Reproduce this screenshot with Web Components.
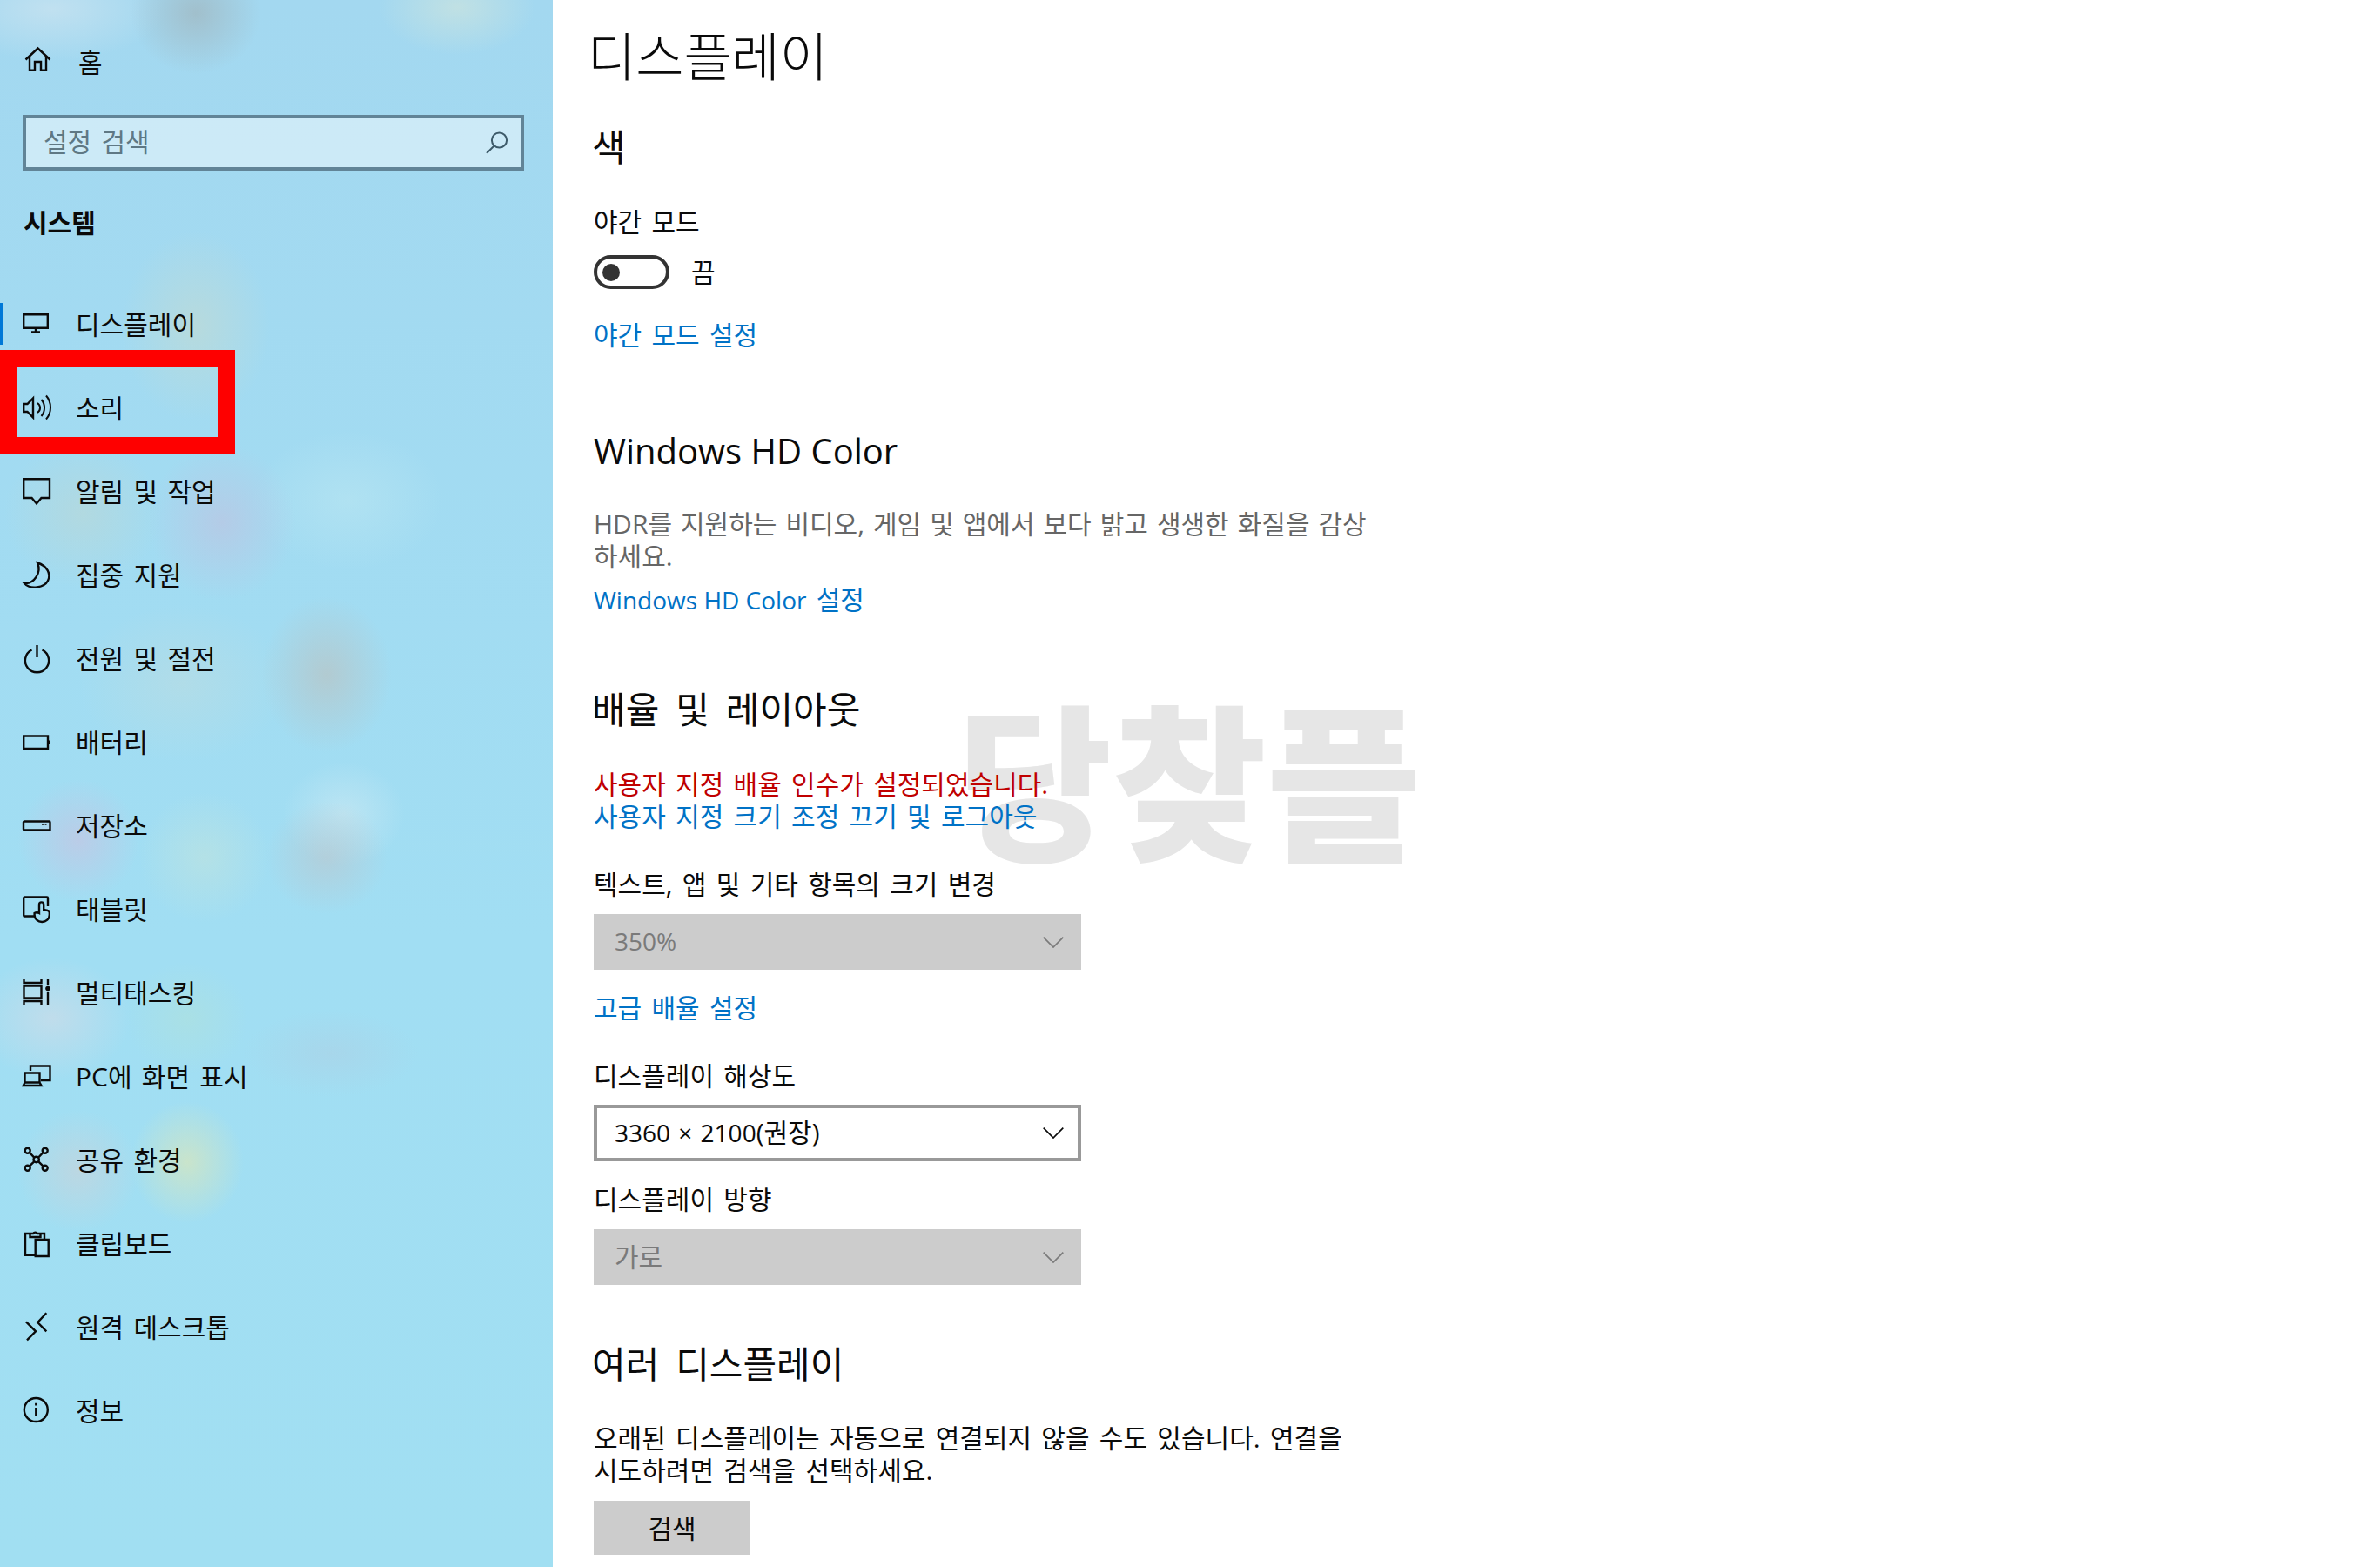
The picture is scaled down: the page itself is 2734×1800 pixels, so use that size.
<!DOCTYPE html>
<html lang="ko">
<head>
<meta charset="utf-8">
<title>디스플레이</title>
<style>
  html, body { margin: 0; height: 100%; background: #fff; }
  body { font-family: "Open Sans", "Noto Sans CJK KR", sans-serif; overflow: hidden; }
</style>
</head>
<body>
<settings-window>
  <settings-sidebar slot="side"></settings-sidebar>
  <display-page slot="main"></display-page>
</settings-window>

<script>
const FONT = '"Open Sans", "Noto Sans CJK KR", sans-serif';

// 32x32 line icons, drawn from the reference
const ICONS = {
  home: '<path d="M3.5 14.5 17.5 1.5 31.5 14.5M8 11V26.8h6V17h7v9.8h6V11"/>',
  display: '<path d="M1.2 4.2H28.8V19.8H1.2ZM15 20v4M10 24.5H20"/>',
  sound: '<path d="M1.2 11H5.5L12 4.5V26.5L5.5 20H1.2Z"/><path d="M17 10A6.5 6.5 0 0 1 17 21M21.5 6A14.6 14.6 0 0 1 21.5 25M27 1.5A20.7 20.7 0 0 1 27 28.5" stroke-width="2"/>',
  notify: '<path d="M1.2 1.2H31V23H21.5L16 29.5 10.5 23H1.2Z"/>',
  moon: '<path d="M17 1.5C28 5 33 14 29 22 25 30 9 33 2 25 13 26 22 13 17 1.5Z"/>',
  power: '<path d="M10.5 5.5A13.6 13.6 0 1 0 22.5 5.5M16.5 0V14"/>',
  battery: '<path d="M1.2 8.5H29V23H1.2Z"/><path d="M30.5 13.5V18" stroke-width="3"/>',
  storage: '<path d="M2 10.5H30.5a1 1 0 0 1 1 1V20.5H2a1 1 0 0 1-1-1V11.5a1 1 0 0 1 1-1Z"/><path d="M22 13.8h2M25.5 13.8h2" stroke-width="1.8"/>',
  tablet: '<path d="M14 23.5H2.2a1 1 0 0 1-1-1V2.5a1 1 0 0 1 1-1H28a1 1 0 0 1 1 1V12"/><path d="M19 20V10a2.6 2.6 0 0 1 5.2 0V16l4.6 1a2.4 2.4 0 0 1 2 2.4V22a8.6 8 0 0 1-17.2 0V20Q16 18.5 19 20Z"/>',
  tasks: '<path d="M1.5 0V4H21.5V0M1.5 7.5H21.5V21.5H1.5ZM1.5 29V25H21.5V29M29 0V7M29 14V29"/><circle cx="29" cy="10.5" r="2.8" fill="currentColor" stroke="none"/>',
  project: '<path d="M9 9V3.5H31.5V20H21M2.5 11.5H19.5V22.5H2.5ZM2.5 22.5 .8 26H21.5L19.5 22.5"/>',
  shared: '<circle cx="5.7" cy="4.7" r="3"/><circle cx="25.7" cy="4.7" r="3"/><circle cx="5.7" cy="24.7" r="3"/><circle cx="25.7" cy="24.7" r="3"/><circle cx="15.7" cy="15" r="3.2"/><path d="M8 7 13.5 12.8M23.4 7 18 12.8M8 22.4 13.5 17.2M23.4 22.4 18 17.2"/>',
  clipboard: '<path d="M14.7 28.7H3V4H8.5M20.5 4H25V11M8.5 8V4H12a3 3 0 0 1 5 0H20.5V8ZM14.7 11H29.7V30H14.7Z"/>',
  remote: '<path d="M4 9.3 15 20.3 5 30.3M27.3-.7 17.3 10 27.3 20.3"/>',
  info: '<circle cx="15.3" cy="14.5" r="13.5"/><path d="M15.3 12V21.5M15.3 6.8V9.4"/>',
};

class SettingsWindow extends HTMLElement {
  constructor() {
    super();
    this.attachShadow({ mode: 'open' }).innerHTML = `
      <style>
        :host { display: grid; grid-template-columns: 635px 1fr; height: 1800px; }
      </style>
      <slot name="side"></slot>
      <slot name="main"></slot>`;
  }
}

class SideIcon extends HTMLElement {
  static get observedAttributes() {
    return ['name'];
  }
  constructor() {
    super();
    this.attachShadow({ mode: 'open' }).innerHTML = `
      <style>
        :host { display: block; width: 32px; height: 32px; color: #0a0a0a; flex: none; }
        svg { display: block; overflow: visible; fill: none; stroke: currentColor; stroke-width: 2.4; }
      </style>
      <svg width="32" height="32" viewBox="0 0 32 32"></svg>`;
  }
  attributeChangedCallback(attr, oldVal, newVal) {
    this.shadowRoot.querySelector('svg').innerHTML = ICONS[newVal] || '';
  }
}

class NavItem extends HTMLElement {
  constructor() {
    super();
    this.attachShadow({ mode: 'open' }).innerHTML = `
      <style>
        :host {
          display: flex; align-items: center; position: relative;
          height: 96px; box-sizing: border-box; padding-left: 26px;
          font-size: 30px; word-spacing: 3.5px; color: #0a0a0a;
        }
        .label { margin-left: 29px; line-height: 40px; white-space: pre; }
        .bar { display: none; position: absolute; left: 0; top: 23px; width: 3px; height: 48px; background: #0078d7; }
        :host([active]) .bar { display: block; }
        .mark { display: none; position: absolute; left: 0; top: -19px; width: 270px; height: 120px; box-sizing: border-box; border: 20px solid #fe0000; }
        :host([marked]) .mark { display: block; }
      </style>
      <span class="bar"></span>
      <side-icon id="ic"></side-icon>
      <span class="label"><slot></slot></span>
      <span class="mark"></span>`;
  }
  connectedCallback() {
    this.shadowRoot.getElementById('ic').setAttribute('name', this.getAttribute('icon'));
  }
}

class SearchBox extends HTMLElement {
  constructor() {
    super();
    this.attachShadow({ mode: 'open' }).innerHTML = `
      <style>
        :host {
          display: flex; align-items: center; justify-content: space-between;
          width: 576px; height: 64px; box-sizing: border-box;
          border: 4px solid #618497; background: rgba(255,255,255,.45);
          padding: 0 14px 0 20px;
          font-size: 30px; word-spacing: 3.5px; color: #5f7884;
        }
        span { padding-bottom: 6px; }
        svg { display: block; fill: none; stroke: #3d5a69; stroke-width: 2; }
      </style>
      <span><slot></slot></span>
      <svg width="26" height="26" viewBox="0 0 26 26"><circle cx="15.5" cy="10" r="8.6"/><path d="M9.5 16.5 1 25"/></svg>`;
  }
}

class SettingsSidebar extends HTMLElement {
  constructor() {
    super();
    this.attachShadow({ mode: 'open' }).innerHTML = `
      <style>
        :host {
          display: block; height: 1800px; overflow: hidden; box-sizing: border-box;
          font-family: ${FONT};
          background:
            radial-gradient(75px 70px at 225px 15px, rgba(160,175,180,.6), transparent),
            radial-gradient(130px 60px at 60px 10px, rgba(205,228,240,.7), transparent),
            radial-gradient(90px 55px at 525px 8px, rgba(205,228,222,.7), transparent),
            radial-gradient(85px 110px at 225px 375px, rgba(200,218,205,.55), transparent),
            radial-gradient(85px 90px at 255px 600px, rgba(190,195,225,.65), transparent),
            radial-gradient(90px 85px at 95px 590px, rgba(190,215,210,.55), transparent),
            radial-gradient(110px 80px at 400px 575px, rgba(190,232,242,.5), transparent),
            radial-gradient(75px 90px at 375px 775px, rgba(185,195,195,.7), transparent),
            radial-gradient(120px 90px at 210px 785px, rgba(195,220,220,.45), transparent),
            radial-gradient(70px 70px at 90px 965px, rgba(200,195,225,.65), transparent),
            radial-gradient(75px 75px at 235px 985px, rgba(195,228,220,.55), transparent),
            radial-gradient(70px 65px at 375px 985px, rgba(190,195,200,.55), transparent),
            radial-gradient(70px 60px at 395px 935px, rgba(200,232,242,.7), transparent),
            radial-gradient(70px 65px at 215px 1170px, rgba(175,225,220,.6), transparent),
            radial-gradient(90px 70px at 60px 1170px, rgba(205,220,232,.7), transparent),
            radial-gradient(65px 70px at 215px 1335px, rgba(215,230,190,.75), transparent),
            radial-gradient(70px 70px at 90px 1345px, rgba(205,210,215,.6), transparent),
            radial-gradient(100px 50px at 380px 1210px, rgba(175,205,225,.45), transparent),
            linear-gradient(#a3d8f0, #a1def3 60%, #a1dff2);
        }
        .home { display: flex; align-items: center; height: 40px; margin-top: 50px; padding-left: 26px; font-size: 30px; color: #0a0a0a; }
        .home span { margin-left: 32px; }
        search-box { margin: 42px 0 0 26px; }
        h2 { margin: 40px 0 0 27px; font-size: 30px; line-height: 40px; font-weight: 700; color: #0a0a0a; }
        nav { margin-top: 49px; }
      </style>
      <div class="home"><side-icon name="home"></side-icon><span>홈</span></div>
      <search-box>설정 검색</search-box>
      <h2>시스템</h2>
      <nav>
        <nav-item icon="display" active>디스플레이</nav-item>
        <nav-item icon="sound" marked>소리</nav-item>
        <nav-item icon="notify">알림 및 작업</nav-item>
        <nav-item icon="moon">집중 지원</nav-item>
        <nav-item icon="power">전원 및 절전</nav-item>
        <nav-item icon="battery">배터리</nav-item>
        <nav-item icon="storage">저장소</nav-item>
        <nav-item icon="tablet">태블릿</nav-item>
        <nav-item icon="tasks">멀티태스킹</nav-item>
        <nav-item icon="project">PC에 화면 표시</nav-item>
        <nav-item icon="shared">공유 환경</nav-item>
        <nav-item icon="clipboard">클립보드</nav-item>
        <nav-item icon="remote">원격 데스크톱</nav-item>
        <nav-item icon="info">정보</nav-item>
      </nav>`;
  }
}

class NightToggle extends HTMLElement {
  constructor() {
    super();
    this.attachShadow({ mode: 'open' }).innerHTML = `
      <style>
        :host { display: flex; align-items: center; height: 39px; font-size: 30px; color: #0a0a0a; }
        .track { width: 87px; height: 39px; box-sizing: border-box; border: 4px solid #333; border-radius: 20px; display: flex; align-items: center; padding-left: 6px; }
        .knob { width: 20px; height: 20px; border-radius: 50%; background: #333; }
        span { margin-left: 25px; }
      </style>
      <div class="track"><div class="knob"></div></div>
      <span><slot></slot></span>`;
  }
}

class ComboBox extends HTMLElement {
  constructor() {
    super();
    this.attachShadow({ mode: 'open' }).innerHTML = `
      <style>
        :host {
          display: flex; align-items: center; justify-content: space-between;
          width: 560px; height: 64px; box-sizing: border-box; padding: 0 20px 0 24px;
          background: #ccc; color: #7a7a7a; font-size: 30px;
        }
        :host([enabled]) { height: 65px; background: #fff; border: 4px solid #999; color: #0a0a0a; padding: 0 16px 0 20px; }
        span { padding-bottom: 2px; }
        svg { display: block; fill: none; stroke: currentColor; stroke-width: 1.7; }
      </style>
      <span><slot></slot></span>
      <svg width="24" height="13" viewBox="0 0 24 13"><path d="M.7 .7 12 12 23.3 .7"/></svg>`;
  }
}

class DisplayPage extends HTMLElement {
  constructor() {
    super();
    this.attachShadow({ mode: 'open' }).innerHTML = `
      <style>
        :host {
          display: block; position: relative; height: 1800px; box-sizing: border-box;
          padding: 25px 0 0 47px; overflow: hidden;
          font-family: ${FONT}; font-size: 30px; line-height: 37px; word-spacing: 3.5px; color: #0a0a0a;
        }
        h1, h3, p { margin: 0; font-weight: 400; position: relative; }
        h1 { font-size: 60px; line-height: 80px; margin-left: -7px; font-weight: 300; }
        h3 { font-size: 42px; line-height: 60px; word-spacing: 8px; margin-left: -2px; }
        h3.latin { font-size: 40px; word-spacing: 0; margin-left: 0; }
        p { width: 890px; }
        .en { font-size: 28px; word-spacing: 0; }
        .link { color: #0072c6; }
        .note { color: #666; word-spacing: 2.2px; }
        .warn { color: #c00000; }
        night-toggle, combo-box, .find { position: relative; }
        .find { display: flex; align-items: center; justify-content: center; width: 180px; height: 62px; background: #ccc; }
        .mark { position: absolute; left: 465px; top: 770px; font-size: 193px; line-height: 260px; font-weight: 900; color: #e6e6e6; white-space: nowrap; word-spacing: 0; }
      </style>
      <div class="mark">당찾플</div>
      <h1>디스플레이</h1>
      <h3 style="margin-top:34px">색</h3>
      <p style="margin-top:37px">야간 모드</p>
      <night-toggle style="margin-top:20px">끔</night-toggle>
      <p class="link" style="margin-top:34px">야간 모드 설정</p>
      <h3 class="latin" style="margin-top:85px">Windows HD Color</h3>
      <p class="note" style="margin-top:35px">HDR를 지원하는 비디오, 게임 및 앱에서 보다 밝고 생생한 화질을 감상하세요.</p>
      <p class="link" style="margin-top:13px"><span class="en">Windows HD Color</span> 설정</p>
      <h3 style="margin-top:77px">배율 및 레이아웃</h3>
      <p class="warn" style="margin-top:37px">사용자 지정 배율 인수가 설정되었습니다.</p>
      <p class="link">사용자 지정 크기 조정 끄기 및 로그아웃</p>
      <p style="margin-top:41px">텍스트, 앱 및 기타 항목의 크기 변경</p>
      <combo-box style="margin-top:16px"><span style="font-size:28px">350%</span></combo-box>
      <p class="link" style="margin-top:25px">고급 배율 설정</p>
      <p style="margin-top:41px">디스플레이 해상도</p>
      <combo-box enabled style="margin-top:15px"><span style="font-size:28px;word-spacing:2px">3360 × 2100</span>(권장)</combo-box>
      <p style="margin-top:25px">디스플레이 방향</p>
      <combo-box style="margin-top:16px">가로</combo-box>
      <h3 style="margin-top:61px">여러 디스플레이</h3>
      <p style="margin-top:36px;width:870px">오래된 디스플레이는 자동으로 연결되지 않을 수도 있습니다. 연결을 시도하려면 검색을 선택하세요.</p>
      <div class="find" style="margin-top:17px">검색</div>`;
  }
}

customElements.define('side-icon', SideIcon);
customElements.define('nav-item', NavItem);
customElements.define('search-box', SearchBox);
customElements.define('settings-sidebar', SettingsSidebar);
customElements.define('night-toggle', NightToggle);
customElements.define('combo-box', ComboBox);
customElements.define('display-page', DisplayPage);
customElements.define('settings-window', SettingsWindow);
</script>
</body>
</html>
